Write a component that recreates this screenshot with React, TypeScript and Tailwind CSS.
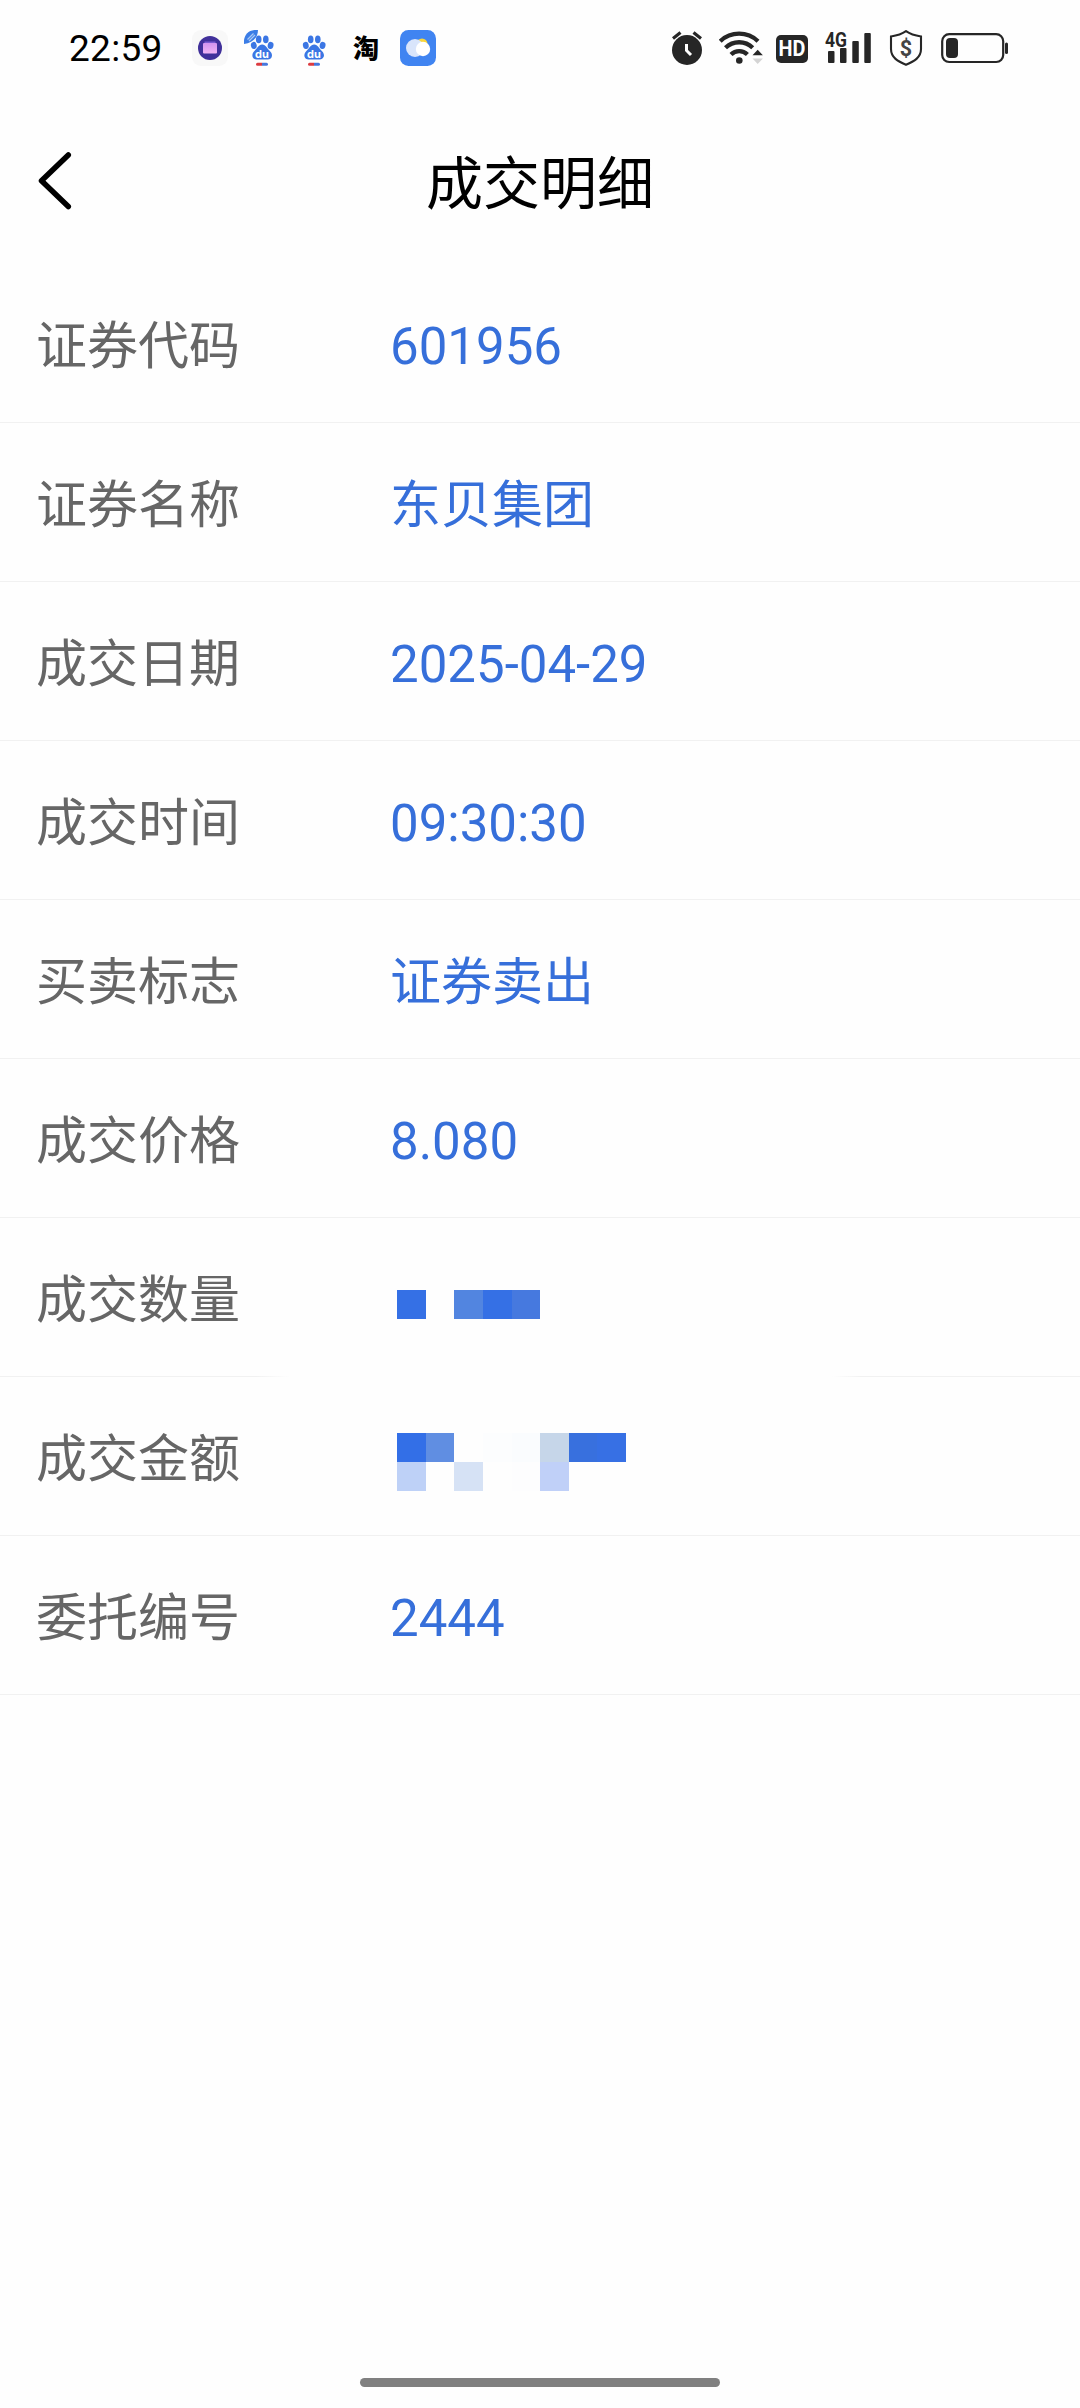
import React from "react";

function PurpleAppIcon() {
  return (
    <svg viewBox="0 0 36 36" className="size-9 shrink-0">
      <defs>
        <linearGradient id="folder" x1="0" y1="0" x2="0" y2="1">
          <stop offset="0" stopColor="#d293ee" />
          <stop offset="1" stopColor="#f0b4f4" />
        </linearGradient>
      </defs>
      <rect width="36" height="36" rx="9" fill="#f8f8f8" />
      <circle cx="18" cy="18" r="12" fill="#40309a" />
      <path d="M12.500 11.500h11v4h-11z" fill="#7a5bd0" />
      <rect x="11" y="13" width="14" height="10.500" rx="1" fill="url(#folder)" />
    </svg>
  );
}

function PawIcon({ leaf = false }: { leaf?: boolean }) {
  return (
    <svg viewBox="0 0 36 36" className="size-9 shrink-0">
      {leaf && (
        <>
          <path d="M0 14C-1 6 4-1 14 0C14 8 8 13 0 14Z" fill="#3b7de6" />
          <path d="M3.500 9.500l6-6M5 11l6-6" stroke="#a9c8f5" strokeWidth="1.300" />
        </>
      )}
      <g fill="#3b76e4">
        <ellipse cx="9.800" cy="15.400" rx="2.900" ry="3.600" transform="rotate(-12 9.800 15.400)" />
        <ellipse cx="14.700" cy="9.400" rx="2.800" ry="3.800" />
        <ellipse cx="21.800" cy="9.400" rx="2.800" ry="3.800" />
        <ellipse cx="26.600" cy="15.400" rx="2.900" ry="3.600" transform="rotate(12 26.600 15.400)" />
        <path d="M18.200 14.500c3.800 0 4.600 4 7.400 6.300 4.600 4.300 1.800 8.700-2 8.700H12.600c-4.200 0-6-4.800-2-8.700 2.800-2.300 3.800-6.300 7.600-6.300Z" />
      </g>
      <text x="18" y="27.500" textAnchor="middle" fontSize="11" fontWeight="700" fill="#fff" fontFamily="Inter, sans-serif">du</text>
      <path d="M13.500 32.800H18V35.800H13.500a1.500 1.500 0 0 1 0-3Z" fill="#dc3b40" />
      <path d="M18 32.800h4.500a1.500 1.500 0 0 1 0 3H18Z" fill="#4778dd" />
    </svg>
  );
}

function CloudAppIcon() {
  return (
    <svg viewBox="0 0 36 36" className="size-9 shrink-0">
      <rect width="36" height="36" rx="8.500" fill="#4084f1" />
      <circle cx="22" cy="14" r="5.500" fill="#f8d63c" />
      <circle cx="15" cy="18" r="9" fill="#d9e5fb" />
      <circle cx="23" cy="19" r="7.200" fill="#fff" />
    </svg>
  );
}

function StatusBar() {
  return (
    <div className="flex h-24 items-center pr-[72px] pl-[69px]">
      <div className="w-[123px] pt-0.5 text-[37px] leading-9 tracking-[0.3px] text-black">22:59</div>
      <div className="flex gap-4">
        <PurpleAppIcon />
        <PawIcon leaf />
        <PawIcon />
        <div className="flex size-9 items-center justify-center pb-0.5 font-['Noto_Sans_CJK_SC',sans-serif] text-[26px] leading-9 font-black text-black">淘</div>
        <CloudAppIcon />
      </div>
      <div className="ml-auto flex items-center text-[#262626]">
        {/* alarm */}
        <svg viewBox="0 0 30 36" className="mr-[17px] h-9 w-[30px]">
          <circle cx="15" cy="20" r="15" fill="currentColor" />
          <path d="M1 8.500L8.500 2.500M29 8.500L21.500 2.500" stroke="currentColor" strokeWidth="3.200" />
          <path d="M14.500 14v6.500l4.500 4.500" stroke="#fff" strokeWidth="3" fill="none" />
        </svg>
        {/* wifi with traffic arrows */}
        <svg viewBox="0 0 44 36" className="mr-[13px] h-9 w-11">
          <g fill="none" stroke="currentColor" strokeWidth="4.300">
            <path d="M1.200 11.200a27.500 27.500 0 0 1 37.800 0" />
            <path d="M6.500 17.800a19.500 19.500 0 0 1 27.200 0" />
            <path d="M12 24.500a11.800 11.800 0 0 1 16.400 0" />
          </g>
          <circle cx="20.300" cy="30.500" r="3.300" fill="currentColor" />
          <path d="M33.500 25.300l5.200-5.500 5.200 5.500Z" fill="currentColor" />
          <path d="M33.500 28.500h10.400l-5.200 5.500Z" fill="#d4d4d4" />
        </svg>
        <div className="mt-0.5 mr-[17px] flex h-7 w-8 items-center justify-center rounded-[5px] bg-[#262626]">
          <span className="scale-x-90 text-[22px] leading-7 font-bold text-white">HD</span>
        </div>
        {/* signal strength */}
        <svg viewBox="0 0 46 36" className="mr-[18px] h-9 w-[46px] overflow-visible">
          <text x="0" y="16.500" fontSize="20.500" fontWeight="700" textLength="22" lengthAdjust="spacingAndGlyphs" fill="currentColor" fontFamily="Roboto, sans-serif">4G</text>
          <g fill="currentColor">
            <rect x="3" y="21" width="6.500" height="12" rx="1" />
            <rect x="15" y="18" width="6.500" height="15" rx="1" />
            <rect x="27.300" y="11" width="6.500" height="22" rx="1" />
            <rect x="39.300" y="3" width="6.500" height="30" rx="1" />
          </g>
        </svg>
        {/* payment shield */}
        <svg viewBox="0 0 34 36" className="mr-[18px] h-9 w-[34px]">
          <path d="M17 1.200c4.500 3.200 9.500 4.500 15 5.300V19c0 8.500-7 12.500-15 15.800C9 31.500 2 27.500 2 19V6.500C7.500 5.700 12.500 4.400 17 1.200Z" fill="none" stroke="currentColor" strokeWidth="2.100" />
          <text x="17" y="25.500" textAnchor="middle" fontSize="21.500" fontWeight="700" fill="#444" fontFamily="Roboto, sans-serif">$</text>
        </svg>
        {/* battery */}
        <svg viewBox="0 0 67 36" className="h-9 w-[67px]">
          <rect x="1.200" y="4.200" width="61" height="27.800" rx="7" fill="none" stroke="currentColor" strokeWidth="2.200" />
          <rect x="5" y="8" width="12" height="20" rx="4" fill="currentColor" />
          <rect x="64" y="12.500" width="3" height="11.500" rx="1.500" fill="currentColor" />
        </svg>
      </div>
    </div>
  );
}

/* Pixelated cover over private amounts; one colour per block. */
function Mosaic({ rows }: { rows: string[][] }) {
  return (
    <div className="ml-[7px] flex flex-col">
      {rows.map((cells, r) => (
        <div key={r} className="flex h-[29px]">
          {cells.map((c, i) => (
            <span key={i} className="h-[29px] w-[28.625px]" style={{ backgroundColor: c }} />
          ))}
        </div>
      ))}
    </div>
  );
}

const NONE = "transparent";

const fields: { label: string; value: React.ReactNode; faded?: boolean }[] = [
  { label: "证券代码", value: "601956" },
  { label: "证券名称", value: "东贝集团" },
  { label: "成交日期", value: "2025-04-29" },
  { label: "成交时间", value: "09:30:30" },
  { label: "买卖标志", value: "证券卖出" },
  { label: "成交价格", value: "8.080" },
  {
    label: "成交数量",
    value: (
      <div className="pt-[7px]">
        <Mosaic rows={[["#3570e5", NONE, "#5285e0", "#3570e5", "#4679df"]]} />
      </div>
    ),
    faded: true,
  },
  {
    label: "成交金额",
    value: (
      <div className="pt-1">
        <Mosaic
          rows={[
            ["#336fe7", "#608ee2", NONE, "#fcfdfe", "#fafcfe", "#c6d6e9", "#3870de", "#3770e4"],
            ["#bed1f7", NONE, "#d6e2f5", NONE, "#fdfdfe", "#c0d0f8", NONE, NONE],
          ]}
        />
      </div>
    ),
  },
  { label: "委托编号", value: "2444" },
];

export default function App() {
  return (
    <div className="flex h-[2408px] w-[1080px] flex-col bg-[#fefefe] font-[Roboto,'Noto_Sans_CJK_SC',sans-serif]">
      <StatusBar />
      <header className="grid h-[168px] grid-cols-[1fr_auto_1fr] items-start px-9 pt-[49px]">
        <svg viewBox="0 0 36 60" className="mt-1.5 h-[60px] w-9" fill="none" stroke="#000" strokeWidth="5.500" strokeLinecap="round" strokeLinejoin="round">
          <path d="M32.300 4L5.500 29.800L32.300 55.500" />
        </svg>
        <h1 className="text-[57px] leading-[80px] font-normal text-black">成交明细</h1>
      </header>
      <main>
        {fields.map((f) => (
          <div key={f.label} className="flex h-[159px] flex-col">
            <div className="flex flex-1 items-center pt-2 pl-9">
              <div className="w-[354px] text-[51px] leading-[60px] text-[#666666]">{f.label}</div>
              <div className="text-[51px] leading-[60px] text-[#366fda]">{f.value}</div>
            </div>
            {f.faded ? (
              <div className="flex h-px justify-between">
                <span className="w-[290px] bg-linear-to-r from-[#f1f1f1] from-88% to-[#fefefe]" />
                <span className="w-[248px] bg-linear-to-l from-[#f1f1f1] from-88% to-[#fefefe]" />
              </div>
            ) : (
              <div className="h-px bg-[#f1f1f1]" />
            )}
          </div>
        ))}
      </main>
      <div className="mx-auto mt-auto mb-[21px] h-[9px] w-[360px] rounded-full bg-[#808080]" />
    </div>
  );
}
